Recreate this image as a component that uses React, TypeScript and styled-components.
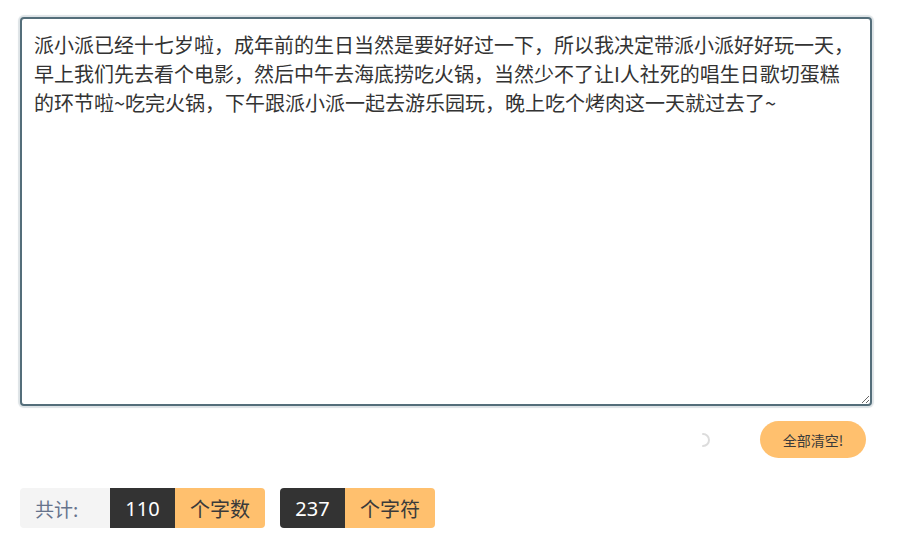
import React, { useEffect, useRef } from "react";
import styled, { createGlobalStyle } from "styled-components";

const Global = createGlobalStyle`
  html, body { margin: 0; padding: 0; background: #fff; }
  body { font-family: "Noto Sans CJK SC", "Noto Sans", sans-serif; }
`;

const Page = styled.div`
  padding: 17px 42px 0 20px;
  width: 852px;
`;

const Editor = styled.textarea`
  display: block;
  box-sizing: border-box;
  width: 852px;
  height: 389px;
  margin: 0;
  padding: 11px 12px 8px;
  border: 2px solid #546e7a;
  border-radius: 4px;
  box-shadow: 0 0 1px 2px #dde3e6;
  outline: none;
  resize: vertical;
  font-family: "Noto Sans CJK SC", sans-serif;
  font-size: 20px;
  line-height: 29px;
  color: #333;
  caret-color: #000;
  background: #fff;
`;

const Actions = styled.div`
  display: flex;
  justify-content: flex-end;
  align-items: center;
  margin-top: 15px;
  padding-right: 6px;
  gap: 50px;
`;

const Spinner = styled.svg`
  display: block;
  width: 14px;
  height: 14px;
`;

const ClearButton = styled.button`
  width: 106px;
  height: 37px;
  border: none;
  border-radius: 19px;
  background: #ffc06e;
  color: #3a3a3a;
  font-family: "Noto Sans CJK SC", sans-serif;
  font-size: 14px;
  padding: 0;
  cursor: pointer;
`;

const Stats = styled.div`
  display: flex;
  align-items: stretch;
  margin-top: 30px;
  height: 40px;
`;

const Label = styled.div`
  display: flex;
  align-items: center;
  width: 90px;
  box-sizing: border-box;
  padding-left: 15px;
  background: #f4f4f4;
  border-radius: 4px 0 0 4px;
  color: #66738c;
  font-size: 19px;
`;

const Group = styled.div<{ $gap?: number }>`
  display: flex;
  margin-left: ${(p) => p.$gap ?? 0}px;
`;

const Num = styled.div<{ $round?: boolean }>`
  display: flex;
  align-items: center;
  justify-content: center;
  width: 65px;
  background: #333333;
  color: #fff;
  font-family: "Noto Sans", sans-serif;
  font-size: 20px;
  border-radius: ${(p) => (p.$round ? "4px 0 0 4px" : "0")};
`;

const Unit = styled.div`
  display: flex;
  align-items: center;
  justify-content: center;
  width: 90px;
  background: #ffc06e;
  color: #3a3a3a;
  font-size: 20px;
  border-radius: 0 4px 4px 0;
`;

const TEXT =
  "派小派已经十七岁啦，成年前的生日当然是要好好过一下，所以我决定带派小派好好玩一天，早上我们先去看个电影，然后中午去海底捞吃火锅，当然少不了让I人社死的唱生日歌切蛋糕的环节啦~吃完火锅，下午跟派小派一起去游乐园玩，晚上吃个烤肉这一天就过去了~";

export default function App() {
  const ref = useRef<HTMLTextAreaElement>(null);
  useEffect(() => {
    const el = ref.current;
    if (el) {
      el.focus();
      el.setSelectionRange(TEXT.length, TEXT.length);
    }
  }, []);
  return (
    <>
      <Global />
      <Page>
        <Editor ref={ref} defaultValue={TEXT} spellCheck={false} />
        <Actions>
          <Spinner viewBox="0 0 14 14">
            <path
              d="M7 1 A6 6 0 0 1 7 13"
              fill="none"
              stroke="#dcdcdc"
              strokeWidth="2"
              strokeLinecap="round"
            />
          </Spinner>
          <ClearButton>全部清空!</ClearButton>
        </Actions>
        <Stats>
          <Label>共计:</Label>
          <Group>
            <Num>110</Num>
            <Unit>个字数</Unit>
          </Group>
          <Group $gap={15}>
            <Num $round>237</Num>
            <Unit>个字符</Unit>
          </Group>
        </Stats>
      </Page>
    </>
  );
}
